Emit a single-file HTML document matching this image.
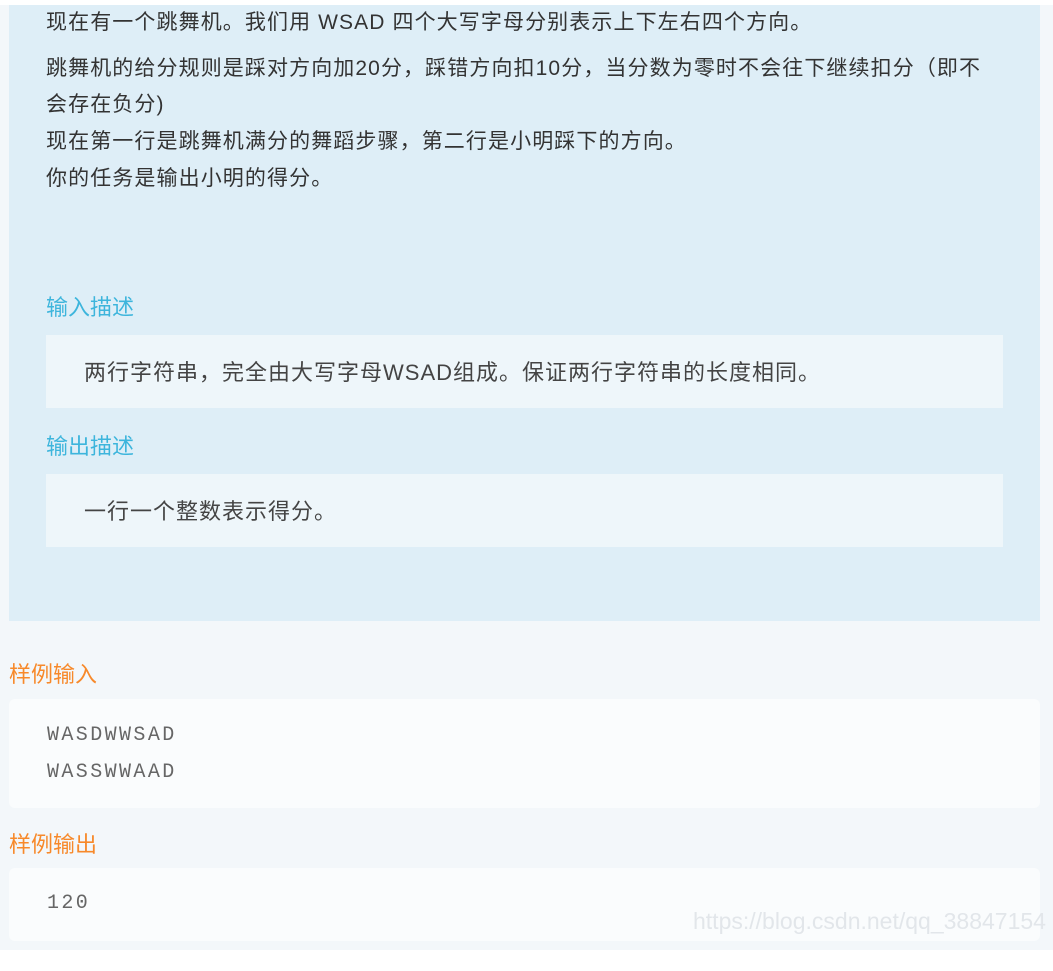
<!DOCTYPE html>
<html><head><meta charset="utf-8"><style>
html,body{margin:0;padding:0;background:#fff;width:1053px;height:971px;overflow:hidden}
body{font-family:"Liberation Sans","Noto Sans CJK SC",sans-serif;position:relative}
.page{position:absolute;left:0;top:5px;width:1053px;height:945px;background:#f3f7fa}
.panel{position:absolute;left:9px;top:5px;width:1031px;height:616px;background:#deeef7}
.t{position:absolute;left:46px;font-size:21px;letter-spacing:1.1px;color:#333;white-space:nowrap;line-height:26px}
.h{position:absolute;left:46px;font-size:22px;color:#3db5dc;line-height:26px}
.box{position:absolute;left:46px;width:957px;background:#eef6fa}
.bt{position:absolute;left:84px;font-size:22px;letter-spacing:1px;color:#444;line-height:26px;white-space:nowrap}
.o{position:absolute;left:9px;font-size:22px;color:#f7892a;line-height:26px}
.code{position:absolute;left:9px;width:1031px;background:#fafcfd;border-radius:6px}
.m{position:absolute;left:47px;font-family:"Liberation Mono",monospace;font-size:20px;letter-spacing:2.4px;color:#666;line-height:26px}
.wm{position:absolute;left:693px;top:908px;font-size:23px;color:#e2e6ea;line-height:26px;white-space:nowrap}
</style></head><body>
<div class="page"></div>
<div class="panel"></div>
<div class="t" style="top:10px">现在有一个跳舞机。我们用 WSAD 四个大写字母分别表示上下左右四个方向。</div>
<div class="t" style="top:56px">跳舞机的给分规则是踩对方向加20分，踩错方向扣10分，当分数为零时不会往下继续扣分（即不</div>
<div class="t" style="top:92px">会存在负分)</div>
<div class="t" style="top:129px">现在第一行是跳舞机满分的舞蹈步骤，第二行是小明踩下的方向。</div>
<div class="t" style="top:166px">你的任务是输出小明的得分。</div>
<div class="h" style="top:295px">输入描述</div>
<div class="box" style="top:335px;height:73px"></div>
<div class="bt" style="top:360px">两行字符串，完全由大写字母WSAD组成。保证两行字符串的长度相同。</div>
<div class="h" style="top:434px">输出描述</div>
<div class="box" style="top:474px;height:73px"></div>
<div class="bt" style="top:499px">一行一个整数表示得分。</div>
<div class="o" style="top:662px">样例输入</div>
<div class="code" style="top:699px;height:109px"></div>
<div class="m" style="top:723px">WASDWWSAD</div>
<div class="m" style="top:760px">WASSWWAAD</div>
<div class="o" style="top:832px">样例输出</div>
<div class="code" style="top:868px;height:73px"></div>
<div class="m" style="top:891px">120</div>
<div class="wm">https://blog.csdn.net/qq_38847154</div>
</body></html>
